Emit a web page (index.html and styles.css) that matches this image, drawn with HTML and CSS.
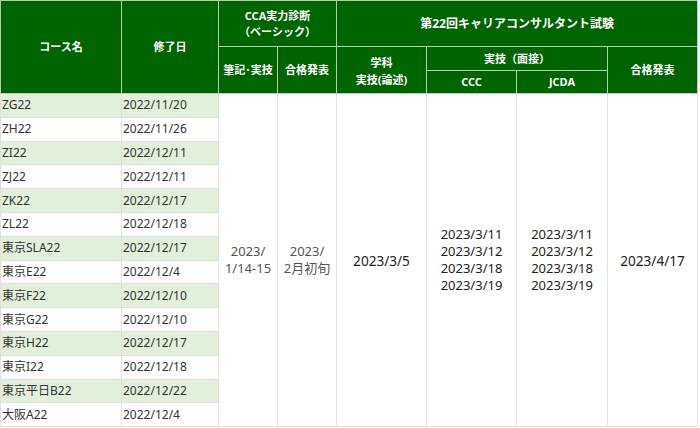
FILE: index.html
```html
<!DOCTYPE html>
<html lang="ja">
<head>
<meta charset="utf-8">
<link rel="stylesheet" href="styles.css">
</head>
<body>
<table class="sched">
  <colgroup>
    <col class="c1"><col class="c2"><col class="c3"><col class="c4"><col class="c5"><col class="c6"><col class="c7"><col class="c8">
  </colgroup>
  <thead>
    <tr class="h1">
      <th rowspan="3">コース名</th>
      <th rowspan="3">修了日</th>
      <th colspan="2" class="cca">CCA実力診断<br>（ベーシック）</th>
      <th colspan="4" class="big">第22回キャリアコンサルタント試験</th>
    </tr>
    <tr class="h2">
      <th rowspan="2">筆記･実技</th>
      <th rowspan="2">合格発表</th>
      <th rowspan="2" class="two">学科<br>実技(論述)</th>
      <th colspan="2">実技（面接）</th>
      <th rowspan="2">合格発表</th>
    </tr>
    <tr class="h3">
      <th>CCC</th>
      <th>JCDA</th>
    </tr>
  </thead>
  <tbody>
    <tr class="g"><td>ZG22</td><td>2022/11/20</td>
      <td rowspan="14" class="m gray">2023/<br>1/14-15</td>
      <td rowspan="14" class="m gray">2023/<br>2月初旬</td>
      <td rowspan="14" class="m one">2023/3/5</td>
      <td rowspan="14" class="m">2023/3/11<br>2023/3/12<br>2023/3/18<br>2023/3/19</td>
      <td rowspan="14" class="m">2023/3/11<br>2023/3/12<br>2023/3/18<br>2023/3/19</td>
      <td rowspan="14" class="m one">2023/4/17</td>
    </tr>
    <tr><td>ZH22</td><td>2022/11/26</td></tr>
    <tr class="g"><td>ZI22</td><td>2022/12/11</td></tr>
    <tr><td>ZJ22</td><td>2022/12/11</td></tr>
    <tr class="g"><td>ZK22</td><td>2022/12/17</td></tr>
    <tr><td>ZL22</td><td>2022/12/18</td></tr>
    <tr class="g"><td>東京SLA22</td><td>2022/12/17</td></tr>
    <tr><td>東京E22</td><td>2022/12/4</td></tr>
    <tr class="g"><td>東京F22</td><td>2022/12/10</td></tr>
    <tr><td>東京G22</td><td>2022/12/10</td></tr>
    <tr class="g"><td>東京H22</td><td>2022/12/17</td></tr>
    <tr><td>東京I22</td><td>2022/12/18</td></tr>
    <tr class="g"><td>東京平日B22</td><td>2022/12/22</td></tr>
    <tr><td>大阪A22</td><td>2022/12/4</td></tr>
  </tbody>
</table>
</body>
</html>
```

FILE: styles.css
```css
html, body {
  margin: 0;
  padding: 0;
  background: #ffffff;
}
body {
  font-family: "Noto Sans", "Noto Sans CJK JP", sans-serif;
  overflow: hidden;
}
.sched {
  border-collapse: collapse;
  table-layout: fixed;
  width: 698px;
}
.c1 { width: 121px; }
.c2 { width: 97px; }
.c3 { width: 59px; }
.c4 { width: 59px; }
.c5 { width: 90px; }
.c6 { width: 90px; }
.c7 { width: 91px; }
.c8 { width: 90px; }

.sched th {
  background: #006400;
  color: #ffffff;
  font-weight: bold;
  font-size: 11px;
  line-height: 16px;
  border: 1px solid #b9cdb5;
  text-align: center;
  vertical-align: middle;
  padding: 0 2px;
}
.sched th.big { font-size: 12px; }
.sched th.two { line-height: 17px; padding-top: 2px; }
.h1 { height: 46px; }
.h2 { height: 24px; }
.h3 { height: 23px; }

.sched td {
  font-size: 12px;
  color: #333333;
  border: 1px solid #e1e1e1;
  height: 22.8px;
  padding: 0 2px 0 1px;
  vertical-align: middle;
  white-space: nowrap;
  line-height: 16px;
}
.sched tr.g td { background: #e2efda; }
.sched tr.g td.m { background: #ffffff; }
.sched td.m {
  text-align: center;
  color: #222222;
  font-size: 13px;
  line-height: 17px;
  padding: 0;
}
.sched td.m.one { font-size: 13.6px; }
.sched td.m.gray { color: #555555; }
```
